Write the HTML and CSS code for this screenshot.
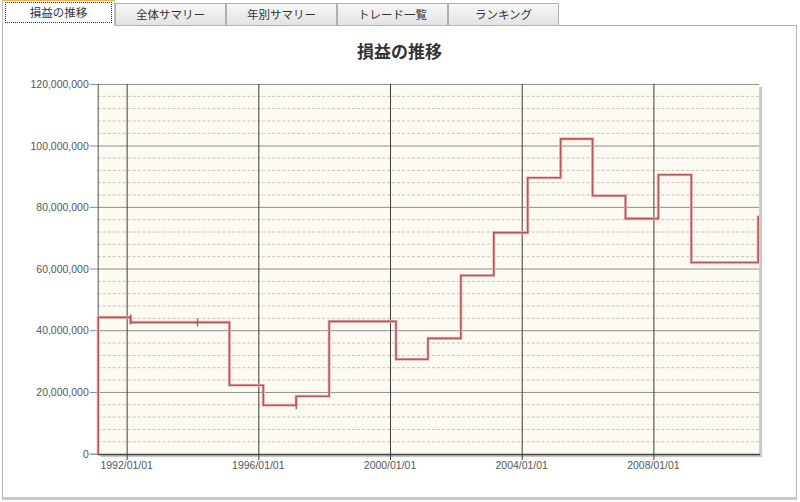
FILE: index.html
```html
<!DOCTYPE html>
<html lang="ja">
<head>
    <meta charset="UTF-8">
    <title>損益の推移</title>
    <link rel="stylesheet" href="styles.css">
</head>
<body>
    <div class="tabs">
        <div class="tab active"><span class="focus">損益の推移</span></div>
        <div class="tab">全体サマリー</div>
        <div class="tab">年別サマリー</div>
        <div class="tab">トレード一覧</div>
        <div class="tab">ランキング</div>
    </div>
    <div class="panel">
        <h1 class="chart-title">損益の推移</h1>
        <svg class="chart" width="793" height="430" viewBox="3 68 793 430">
            <!-- plot shadow + background -->
            <rect x="100" y="87" width="663" height="371" fill="#c8c8c8"/>
            <rect x="97" y="84" width="663" height="371" fill="#fdfaf1"/>

            <!-- minor dashed grid (every 4,000,000) -->
            <g stroke="#c9c2b4" stroke-width="1" stroke-dasharray="3 2">
                <line x1="97" y1="96.4" x2="760" y2="96.4"/><line x1="97" y1="108.7" x2="760" y2="108.7"/>
                <line x1="97" y1="121.1" x2="760" y2="121.1"/><line x1="97" y1="133.5" x2="760" y2="133.5"/>
                <line x1="97" y1="158.2" x2="760" y2="158.2"/><line x1="97" y1="170.6" x2="760" y2="170.6"/>
                <line x1="97" y1="182.9" x2="760" y2="182.9"/><line x1="97" y1="195.3" x2="760" y2="195.3"/>
                <line x1="97" y1="220.0" x2="760" y2="220.0"/><line x1="97" y1="232.4" x2="760" y2="232.4"/>
                <line x1="97" y1="244.8" x2="760" y2="244.8"/><line x1="97" y1="257.1" x2="760" y2="257.1"/>
                <line x1="97" y1="281.9" x2="760" y2="281.9"/><line x1="97" y1="294.2" x2="760" y2="294.2"/>
                <line x1="97" y1="306.6" x2="760" y2="306.6"/><line x1="97" y1="318.9" x2="760" y2="318.9"/>
                <line x1="97" y1="343.7" x2="760" y2="343.7"/><line x1="97" y1="356.1" x2="760" y2="356.1"/>
                <line x1="97" y1="368.4" x2="760" y2="368.4"/><line x1="97" y1="380.8" x2="760" y2="380.8"/>
                <line x1="97" y1="405.5" x2="760" y2="405.5"/><line x1="97" y1="417.9" x2="760" y2="417.9"/>
                <line x1="97" y1="430.3" x2="760" y2="430.3"/><line x1="97" y1="442.6" x2="760" y2="442.6"/>
            </g>

            <!-- major grid (every 20,000,000) + ticks -->
            <g stroke="#8f8f8f" stroke-width="1">
                <line x1="89" y1="84.5" x2="760" y2="84.5"/>
                <line x1="89" y1="146.2" x2="760" y2="146.2"/>
                <line x1="89" y1="207.7" x2="760" y2="207.7"/>
                <line x1="89" y1="269.5" x2="760" y2="269.5"/>
                <line x1="89" y1="331.3" x2="760" y2="331.3"/>
                <line x1="89" y1="393.2" x2="760" y2="393.2"/>
            </g>
            <line x1="89" y1="455" x2="97" y2="455" stroke="#666"/>

            <!-- year lines -->
            <g stroke="#3c3c3c" stroke-width="1">
                <line x1="126.5" y1="84" x2="126.5" y2="461"/>
                <line x1="258.5" y1="84" x2="258.5" y2="461"/>
                <line x1="390.5" y1="84" x2="390.5" y2="461"/>
                <line x1="522.5" y1="84" x2="522.5" y2="461"/>
                <line x1="654.5" y1="84" x2="654.5" y2="461"/>
            </g>

            <!-- axes -->
            <line x1="97.5" y1="84" x2="97.5" y2="456" stroke="#555"/>
            <line x1="97" y1="455.5" x2="761" y2="455.5" stroke="#444" stroke-width="1.5"/>

            <!-- profit line -->
            <path fill="none" stroke="#ecc4c4" stroke-width="3.2"
                  d="M97.5,455 V318 H130 V323 H229 V386 H263 V406 H296 V397 H329 V322 H396 V360 H428 V339 H461 V276 H494 V233 H528 V178 H561 V139 H593 V196 H626 V219 H659 V175 H692 V263 H759 V216"/>
            <path fill="none" stroke="#b9585a" stroke-width="1.6"
                  d="M97.5,455 V318 H130 V323 H229 V386 H263 V406 H296 V397 H329 V322 H396 V360 H428 V339 H461 V276 H494 V233 H528 V178 H561 V139 H593 V196 H626 V219 H659 V175 H692 V263 H759 V216"/>
            <g stroke="#b9585a" stroke-width="1.4">
                <line x1="130" y1="315" x2="130" y2="325"/>
                <line x1="197" y1="319" x2="197" y2="327"/>
                <line x1="296" y1="397" x2="296" y2="410"/>
            </g>

            <!-- y labels -->
            <g class="axis-label" text-anchor="end">
                <text x="88" y="88">120,000,000</text>
                <text x="88" y="150">100,000,000</text>
                <text x="88" y="211">80,000,000</text>
                <text x="88" y="273">60,000,000</text>
                <text x="88" y="335">40,000,000</text>
                <text x="88" y="397">20,000,000</text>
                <text x="88" y="459">0</text>
            </g>

            <!-- x labels -->
            <g class="axis-label" text-anchor="middle">
                <text x="126" y="470">1992/01/01</text>
                <text x="258" y="470">1996/01/01</text>
                <text x="390" y="470">2000/01/01</text>
                <text x="522" y="470">2004/01/01</text>
                <text x="654" y="470">2008/01/01</text>
            </g>
        </svg>
    </div>
</body>
</html>
```

FILE: styles.css
```css
body { margin: 0; background: #fff; font-family: "Noto Sans CJK JP", "Liberation Sans", sans-serif; }
.tabs { display: flex; align-items: flex-end; height: 25px; padding-left: 2px; position: relative; z-index: 1; }
.tab { width: 109px; height: 21px; border: 1px solid #aeb0b3; border-bottom: none; background: linear-gradient(#f7f7f7, #e3e3e3); font-size: 11.5px; color: #333; text-align: center; line-height: 21px; box-sizing: content-box; }
.tab.active { height: 24px; margin-bottom: -1px; background: #fff; border-color: #c0c0c0; border-top: 2px solid #f2b04a; display: flex; padding: 1px 2px 0; width: 107px; }
.focus { flex: 1; border: 1px dotted #333; height: 19px; line-height: 19px; }
.panel { margin: 0 3px 0 2px; border: 1px solid #b4b4b4; border-bottom: 3px solid #c8c8c8; height: 471px; display: flex; flex-direction: column; }
.chart-title { margin: 0; padding-top: 8px; height: 34px; line-height: 34px; text-align: center; font-size: 17px; font-weight: bold; color: #333; }
.chart { display: block; }
.axis-label { font-family: "Liberation Sans", Arial, sans-serif; font-size: 10.5px; fill: #555; }
```
